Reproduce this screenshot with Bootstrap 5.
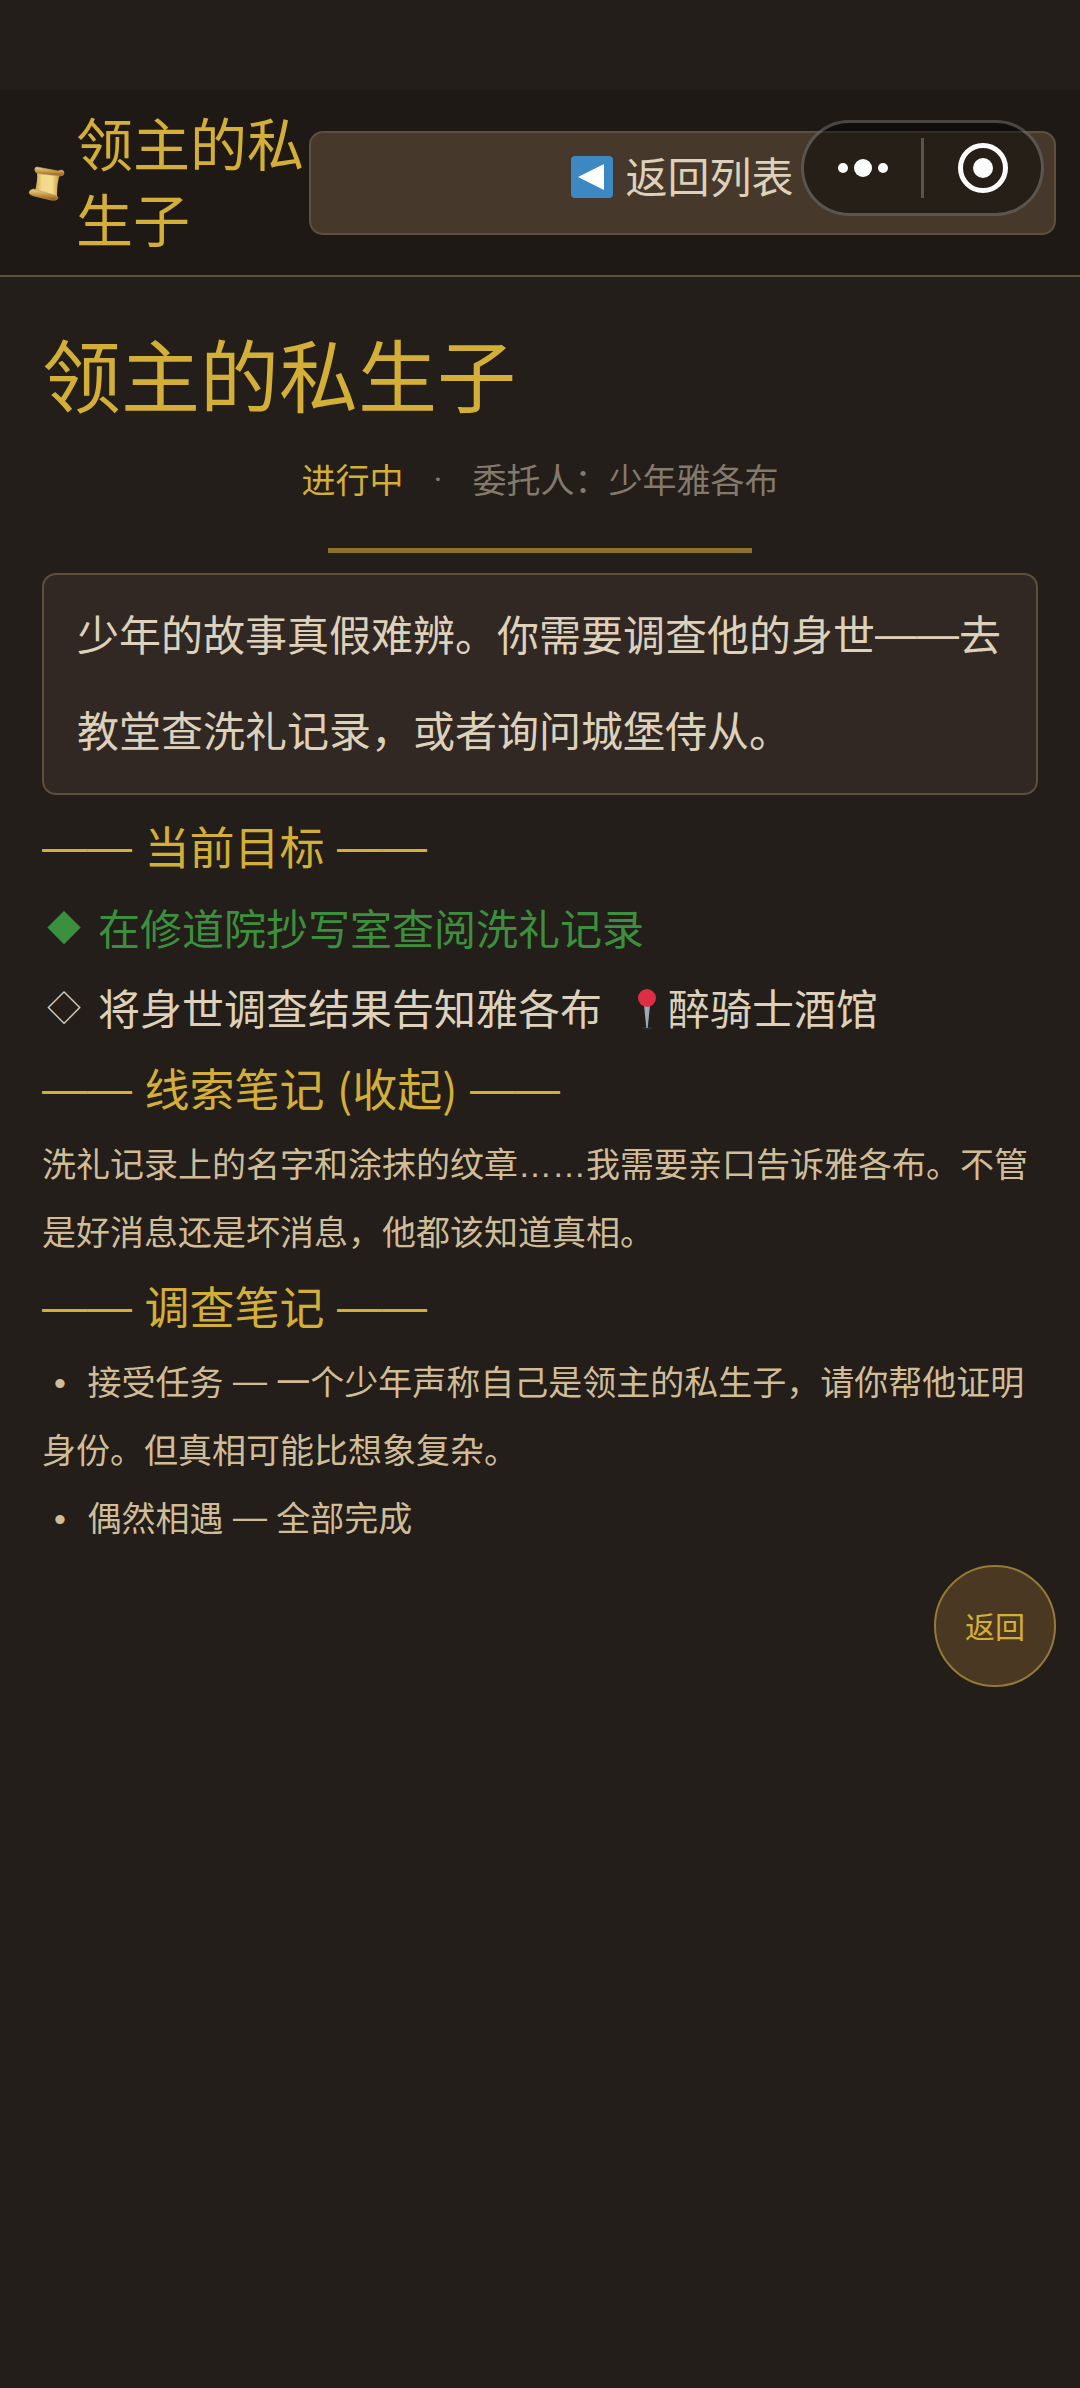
<!DOCTYPE html>
<html lang="zh-CN">
<head>
<meta charset="utf-8">
<meta name="viewport" content="width=device-width, initial-scale=1">
<title>领主的私生子</title>
<link href="https://cdn.jsdelivr.net/npm/bootstrap@5.3.0/dist/css/bootstrap.min.css" rel="stylesheet">
<style>
  :root { --gold: #d4af37; --line: #5f4f3c; --cream: #ddd1bb; --sand: #d0bd98; }
  body { background: #231e1a; color: var(--cream); font-family: "Noto Sans CJK SC", sans-serif; font-size: 42px; }
  .app-header { margin-top: 90px; padding: 13px 24px 12px; background: #1e1914; border-bottom: 2px solid var(--line); }
  .scroll-icon { width: 42px; height: 42px; }
  .app-name { width: 228px; margin: 0 5px 0 10px; padding-bottom: 8px; font-size: 57px; line-height: 76px; color: var(--gold); }
  .back-btn { height: 104px; padding: 0 0 12px; gap: 12px; font-size: 42px; line-height: 60px; color: var(--cream); background: #46392b; border: 2px solid var(--line); border-radius: 14px; }
  .back-btn span { padding-bottom: 4px; }
  .back-btn:hover { color: var(--cream); background: #514232; border-color: var(--line); }
  .capsule { top: 120px; right: 36px; width: 243px; height: 96px; background: rgba(0,0,0,.45); border: 3px solid rgba(255,255,255,.24); border-radius: 48px; }
  .capsule button { background: none; border: 0; }
  .capsule-rule { width: 3px; height: 60px; background: rgba(255,255,255,.24); }
  .quest { padding: 36px 42px 0; }
  .quest-title { font-size: 79px; line-height: 120px; color: var(--gold); }
  .quest-meta { margin-top: 16px; gap: 30px; font-size: 34px; line-height: 60px; color: #84796b; }
  .mid-dot { font-family: Roboto, sans-serif; }
  .gold-text { color: var(--gold); }
  .gold-rule { width: 424px; height: 5px; margin: 39px auto 20px; background: #8c722d; }
  .story { margin-bottom: 10px; padding: 10px 33px 16px; line-height: 96px; background: #322823; border: 2px solid var(--line); border-radius: 14px; }
  .section-title { font-size: 45px; line-height: 82px; color: var(--gold); }
  .section-title button { color: inherit; background: none; line-height: 82px; }
  .goals { line-height: 80px; }
  .goal-done { color: #3c8f3c; }
  .goal-mark { width: 44px; margin-right: 12px; font-size: 34px; text-align: center; }
  .pin { width: 42px; height: 46px; margin-left: 24px; }
  .notes { font-size: 34px; line-height: 68px; color: var(--sand); }
  .latin, .dash { font-family: "Liberation Sans", sans-serif; line-height: 1; }
  .dash { vertical-align: 3px; }
  .bullet { width: 36px; }
  .fab-row { padding: 14px 24px 24px; }
  .fab { width: 122px; height: 122px; padding: 0 0 2px; font-size: 30px; color: var(--gold); background: #4a3823; border: 2px solid #957a36; }
</style>
</head>
<body>
<header class="app-header d-flex align-items-center">
  <svg class="scroll-icon flex-shrink-0" viewBox="0 0 42 42" aria-hidden="true">
    <defs>
      <linearGradient id="paper" x1="0" x2="1"><stop offset="0" stop-color="#c99437"/><stop offset=".3" stop-color="#f0d98a"/><stop offset=".7" stop-color="#f3dc8c"/><stop offset="1" stop-color="#c48f35"/></linearGradient>
      <linearGradient id="roll" x1="0" y1="0" x2="0" y2="1"><stop offset="0" stop-color="#efd386"/><stop offset=".55" stop-color="#c8933a"/><stop offset="1" stop-color="#8a571b"/></linearGradient>
    </defs>
    <path d="M13 9 36 12Q33 20 33 34L10 32Q14 20 13 9Z" fill="url(#paper)"/>
    <path d="M13 5Q10 5 11 9 12 12 17 12L36 14Q40 14 40 11 40 8 37 8L34 9Z" fill="url(#roll)" stroke="#b9a47a" stroke-width=".6"/>
    <path d="M9 27Q5 28 5 31 6 33 10 34L27 38Q33 39 34 36 34 34 31 33Z" fill="url(#roll)" stroke="#b9a47a" stroke-width=".6"/>
  </svg>
  <div class="app-name flex-shrink-0">领主的私生子</div>
  <button type="button" class="btn back-btn flex-grow-1 d-flex align-items-center justify-content-center">
    <svg width="42" height="42" viewBox="0 0 42 42" aria-hidden="true"><rect width="42" height="42" rx="4" fill="#3b88c3"/><path d="M7 21 33 8V34Z" fill="#fff"/></svg>
    <span>返回列表</span>
  </button>
</header>

<div class="capsule position-absolute d-flex align-items-center">
  <button type="button" class="flex-fill p-0 d-flex justify-content-center" aria-label="更多">
    <svg width="52" height="20" viewBox="0 0 52 20" fill="#fff"><circle cx="6" cy="10" r="5"/><circle cx="26" cy="10" r="9"/><circle cx="46" cy="10" r="5"/></svg>
  </button>
  <span class="capsule-rule"></span>
  <button type="button" class="flex-fill p-0 d-flex justify-content-center" aria-label="关闭">
    <svg width="52" height="52" viewBox="0 0 52 52" fill="none"><circle cx="26" cy="26" r="22.5" stroke="#fff" stroke-width="5"/><circle cx="26" cy="26" r="10" fill="#fff"/></svg>
  </button>
</div>

<main class="quest">
  <h1 class="quest-title fw-normal mb-0">领主的私生子</h1>
  <div class="quest-meta d-flex justify-content-center">
    <span class="gold-text">进行中</span><span class="mid-dot">·</span><span>委托人：少年雅各布</span>
  </div>
  <div class="gold-rule"></div>
  <p class="story">少年的故事真假难辨。你需要调查他的身世<span class="dash">——</span>去教堂查洗礼记录，或者询问城堡侍从。</p>

  <h2 class="section-title fw-normal mb-0"><span class="dash">—— </span>当前目标<span class="dash"> ——</span></h2>
  <ul class="goals list-unstyled mb-0">
    <li class="goal-done d-flex align-items-center"><span class="goal-mark">◆</span><span>在修道院抄写室查阅洗礼记录</span></li>
    <li class="d-flex align-items-center"><span class="goal-mark">◇</span><span>将身世调查结果告知雅各布</span>
      <svg class="pin" viewBox="0 -4 42 46" aria-hidden="true"><ellipse cx="21" cy="40" rx="5" ry="1.6" fill="#292f33"/><path d="M18 17H24L21.700 40H20.300Z" fill="#99aab5"/><circle cx="21" cy="10" r="9" fill="#dd2e44"/></svg>
      <span>醉骑士酒馆</span></li>
  </ul>

  <h2 class="section-title fw-normal mb-0"><button type="button" class="border-0 p-0 d-block"><span class="dash">—— </span>线索笔记<span class="latin"> </span>(收起)<span class="dash"> ——</span></button></h2>
  <p class="notes mb-0">洗礼记录上的名字和涂抹的纹章<span class="latin">……</span>我需要亲口告诉雅各布。不管是好消息还是坏消息，他都该知道真相。</p>

  <h2 class="section-title fw-normal mb-0"><span class="dash">—— </span>调查笔记<span class="dash"> ——</span></h2>
  <ul class="notes list-unstyled mb-0">
    <li><span class="latin bullet d-inline-block text-center">•</span><span class="latin"> </span>接受任务<span class="dash"> — </span>一个少年声称自己是领主的私生子，请你帮他证明身份。但真相可能比想象复杂。</li>
    <li><span class="latin bullet d-inline-block text-center">•</span><span class="latin"> </span>偶然相遇<span class="dash"> — </span>全部完成</li>
  </ul>
</main>
<div class="fab-row d-flex justify-content-end">
  <button type="button" class="fab rounded-circle">返回</button>
</div>
<script src="https://cdn.jsdelivr.net/npm/bootstrap@5.3.0/dist/js/bootstrap.bundle.min.js"></script>
</body>
</html>
